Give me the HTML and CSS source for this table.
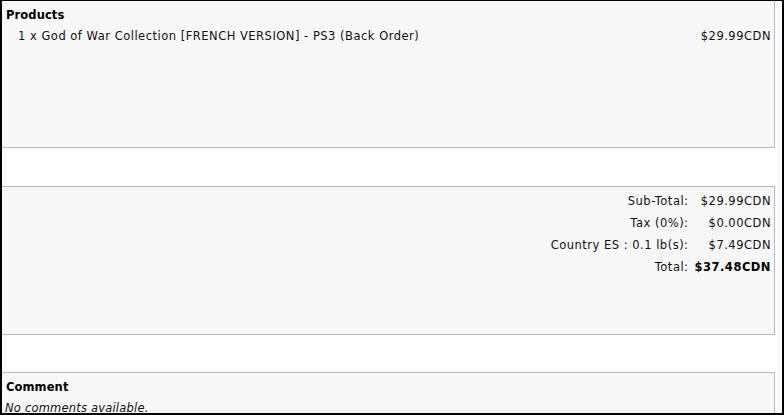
FILE: index.html
```html
<!DOCTYPE html>
<html>
<head>
<meta charset="utf-8">
<link rel="stylesheet" href="styles.css">
</head>
<body>
<div class="frame">
  <div class="box box-products">
    <div class="heading">Products</div>
    <div class="product-row">
      <span class="product-name">1 x God of War Collection [FRENCH VERSION] - PS3 (Back Order)</span>
      <span class="product-price">$29.99CDN</span>
    </div>
  </div>
  <div class="box box-totals">
    <div class="totals">
      <span class="t-label">Sub-Total:</span><span class="t-value">$29.99CDN</span>
      <span class="t-label">Tax (0%):</span><span class="t-value">$0.00CDN</span>
      <span class="t-label">Country ES : 0.1 lb(s):</span><span class="t-value">$7.49CDN</span>
      <span class="t-label">Total:</span><span class="t-value strong">$37.48CDN</span>
    </div>
  </div>
  <div class="box box-comment">
    <div class="heading">Comment</div>
    <div class="comment-text">No comments available.</div>
  </div>
</div>
</body>
</html>
```
FILE: styles.css
```css
html, body {
  margin: 0;
  padding: 0;
  background: #000;
}
body {
  font-family: "DejaVu Sans", Verdana, sans-serif;
  font-size: 11.5px;
  letter-spacing: 0.5px;
  color: #111;
}
.frame {
  margin: 1px 2px 0 2px;
  height: 412px;
  background: #fff;
  overflow: hidden;
  display: flex;
  flex-direction: column;
}
.box {
  background: #f7f7f7;
  border: 1px solid #b7b7c9;
  margin-left: -1px;
  margin-right: 7px;
  flex: none;
}
.box-products {
  margin-top: -1px;
  height: 146px;
}
.box-totals {
  margin-top: 38px;
  height: 147px;
}
.box-comment {
  margin-top: 37px;
  height: 100px;
}
.heading {
  font-weight: bold;
  font-size: 11.5px;
  letter-spacing: 0.1px;
  color: #000;
  padding: 8px 0 0 4px;
  line-height: 13px;
}
.product-row {
  display: flex;
  justify-content: space-between;
  padding: 7px 3px 0 16px;
  line-height: 14px;
}
.totals {
  display: grid;
  grid-template-columns: 1fr auto;
  column-gap: 6px;
  row-gap: 8px;
  justify-items: end;
  padding: 7px 3px 0 0;
  line-height: 14px;
}
.t-value.strong {
  font-weight: bold;
  color: #000;
}
.comment-text {
  font-style: italic;
  letter-spacing: 0.2px;
  padding: 7px 0 0 3px;
  line-height: 14px;
}
```
